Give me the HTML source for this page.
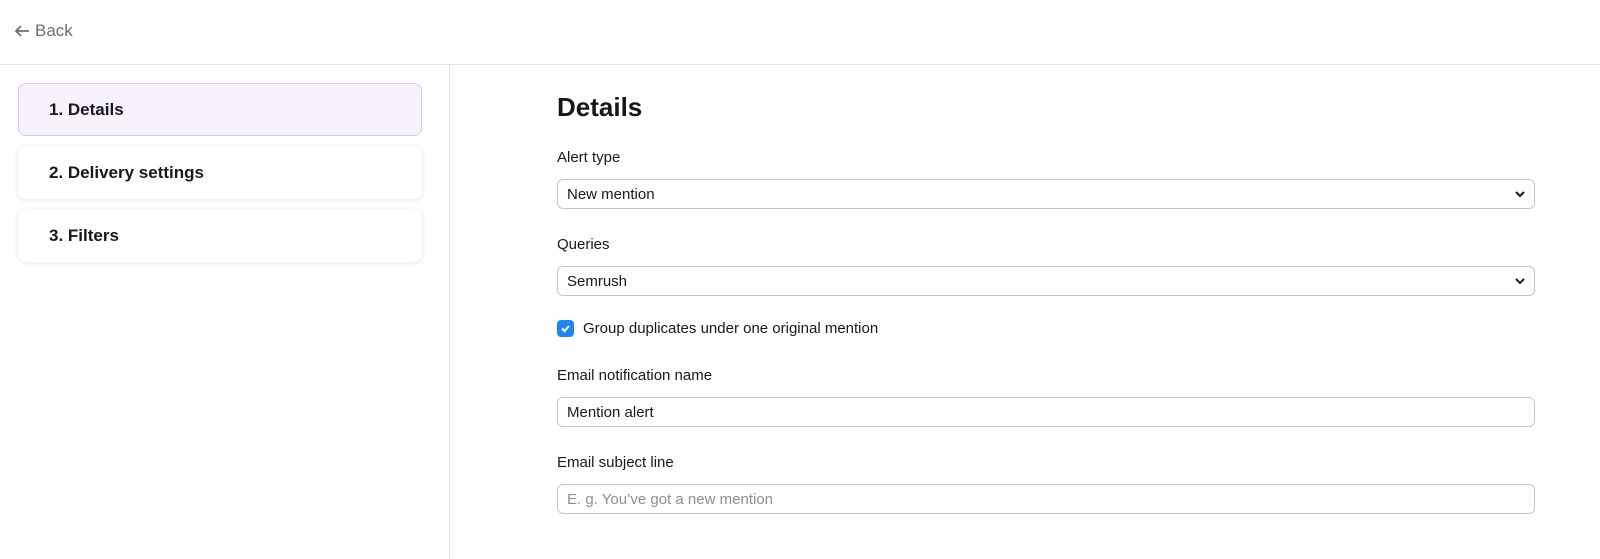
<!DOCTYPE html><html><head><style>
*{box-sizing:border-box;margin:0;padding:0}
body{width:1600px;height:559px;background:#fff;font-family:"Liberation Sans",sans-serif;color:#17181c;position:relative;overflow:hidden}
.hdr{position:absolute;left:0;top:0;width:1600px;height:65px;border-bottom:1px solid #e3e3ea}
.back{position:absolute;left:14px;top:21px;font-size:17px;color:#6c6e79;display:flex;align-items:center;gap:5px;height:20px}
.side{position:absolute;left:449px;top:65px;width:1px;height:494px;background:#e3e3ea}
.card{position:absolute;left:18px;width:404px;height:53px;border-radius:8px;background:#fff;box-shadow:0 1px 6px rgba(40,40,80,.12);font-weight:bold;font-size:17px;padding-left:31px;line-height:53px}
.card.a{background:#f7f2fe;border:1px solid #d9c6fb;box-shadow:none;padding-left:30px;line-height:51px}
h1{position:absolute;left:557px;top:92px;font-size:26px;font-weight:bold}
.lbl{position:absolute;left:557px;font-size:15px;color:#17181c}
.inp{position:absolute;left:557px;width:978px;height:30px;border:1px solid #c4c7cf;border-radius:6px;font-size:15px;padding-left:9px;display:flex;align-items:center}
.ph{color:#8b8e99}
.chev{position:absolute;right:8px;top:8px}
.cb{position:absolute;left:557px;top:320px;width:17px;height:17px;border-radius:4px;background:#1e86f0}
</style></head><body>
<div class="hdr"><div class="back"><svg width="16" height="14" viewBox="0 0 16 14"><path d="M15 7H2M7 2L2 7l5 5" fill="none" stroke="#6c6e79" stroke-width="1.8"/></svg>Back</div></div>
<div class="side"></div>
<div class="card a" style="top:83px">1. Details</div>
<div class="card" style="top:146px">2. Delivery settings</div>
<div class="card" style="top:209px">3. Filters</div>
<h1>Details</h1>
<div class="lbl" style="top:149px">Alert type</div>
<div class="inp" style="top:179px">New mention<svg class="chev" width="12" height="12" viewBox="0 0 12 12"><path d="M2 4l4 4 4-4" fill="none" stroke="#17181c" stroke-width="2"/></svg></div>
<div class="lbl" style="top:236px">Queries</div>
<div class="inp" style="top:266px">Semrush<svg class="chev" width="12" height="12" viewBox="0 0 12 12"><path d="M2 4l4 4 4-4" fill="none" stroke="#17181c" stroke-width="2"/></svg></div>
<div class="cb"><svg width="17" height="17" viewBox="0 0 17 17"><path d="M5 8.5l2.5 2.5 4.5-5" fill="none" stroke="#fff" stroke-width="2"/></svg></div>
<div class="lbl" style="left:583px;top:320px">Group duplicates under one original mention</div>
<div class="lbl" style="top:367px">Email notification name</div>
<div class="inp" style="top:397px">Mention alert</div>
<div class="lbl" style="top:454px">Email subject line</div>
<div class="inp ph" style="top:484px">E. g. You’ve got a new mention</div>
</body></html>
